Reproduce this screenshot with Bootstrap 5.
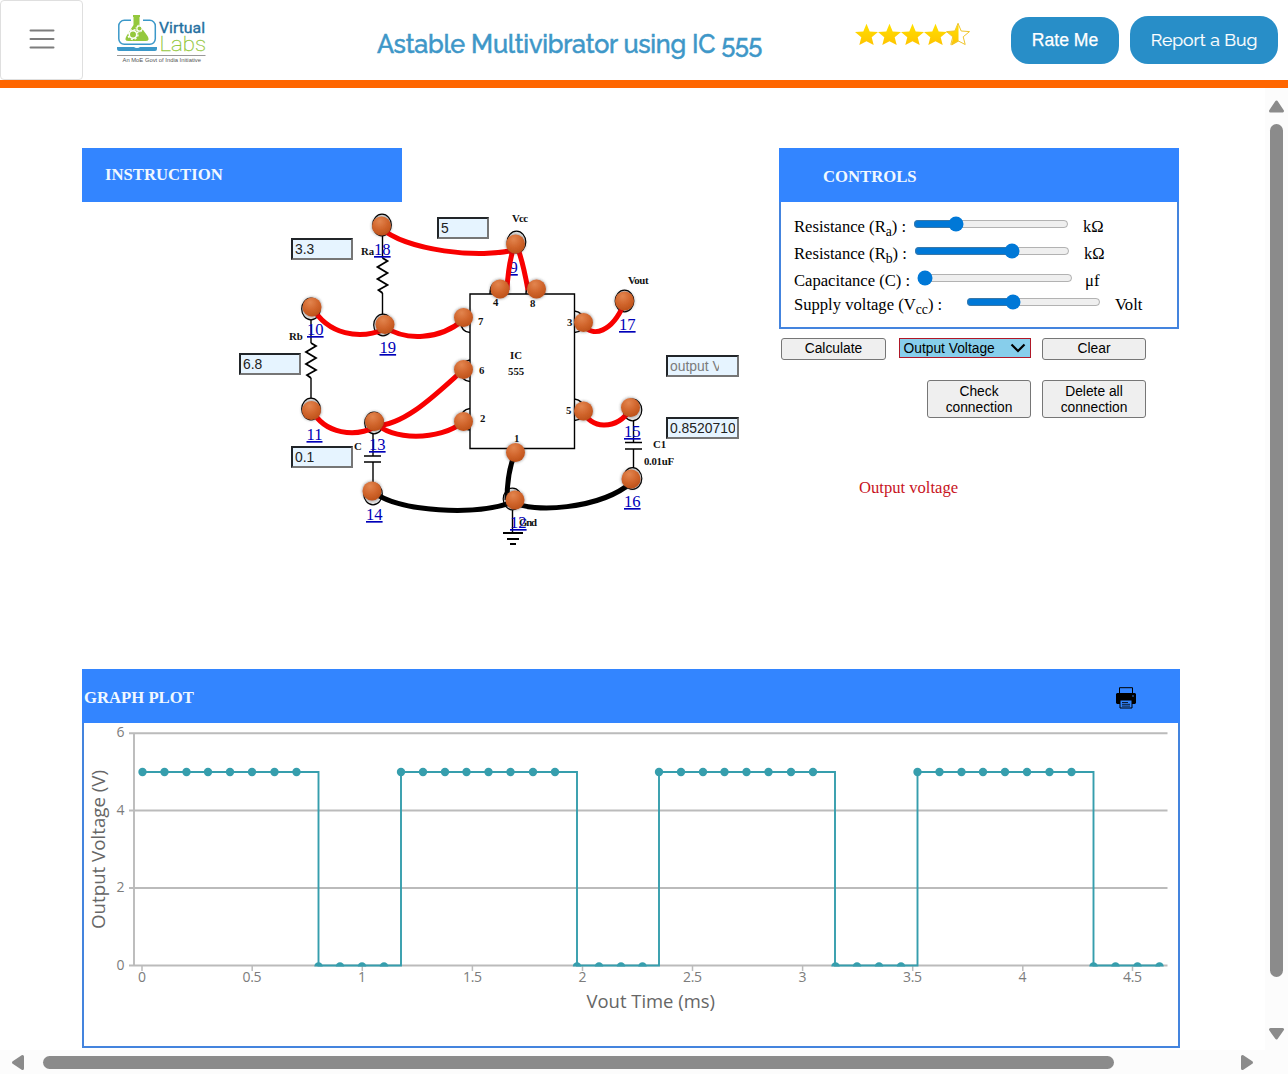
<!DOCTYPE html>
<html lang="en">
<head>
<meta charset="utf-8">
<meta name="viewport" content="width=device-width, initial-scale=1">
<title>Astable Multivibrator using IC 555</title>
<link href="https://cdn.jsdelivr.net/npm/bootstrap@5.3.0/dist/css/bootstrap.min.css" rel="stylesheet">
<script src="https://cdn.jsdelivr.net/npm/bootstrap@5.3.0/dist/js/bootstrap.bundle.min.js" defer></script>
<style>
body{height:1074px;overflow:hidden;background:#fff;color:#000;font-family:"Liberation Serif",serif;font-size:16.6px;line-height:1.2}
.topbar{height:88px;border-bottom:8px solid #ff6600}
.menu-btn{width:83px;height:80px;border:1px solid #dfdfdf;border-radius:4px;background:#fff;padding:0 0 2px 0}
.brand-logo{margin-left:33px}
.lab-title{margin:7px 0 0 169px;width:386px;font:500 25.2px Raleway,Lato,sans-serif;letter-spacing:-.25px;-webkit-text-stroke:.5px #3e97c8;color:#3e97c8;white-space:nowrap}
.stars{margin:-10px 0 0 92px}
.pill,.pill:hover{background:#288ec8;color:#fff;border:0;border-radius:18px;padding:0;white-space:nowrap}
.pill-rate{width:108px;height:47px;margin-left:40px;font:17.6px "Liberation Sans",sans-serif;-webkit-text-stroke:.25px #fff}
.pill-bug{width:148px;height:48px;margin-left:11px;padding-bottom:2px;font:17.6px Raleway,Lato,sans-serif;-webkit-text-stroke:.2px #fff}
.view{width:1265px;height:962px;padding:60px 0 0 82px}
.bench{height:521px}
.bench-left{width:697px}
.bar-title{background:#3385ff;color:aliceblue;font-weight:bold;height:54px;font-size:16.7px}
.instruction{width:320px;padding:0 0 0 23px}
.board{width:697px;height:400px}
.board input{position:absolute;height:22px;width:62px;border:2px solid;border-color:#212529 #767676 #767676 #212529;background:#e6f4ff;padding:0 2px;font:13.9px "Liberation Sans",sans-serif;color:#222;border-radius:0}
.in-ra{left:209px;top:36px}.in-vcc{left:355px;top:15px;width:52px!important}.in-rb{left:157px;top:151px}.in-c{left:209px;top:244px}
.in-out{left:584px;top:153px;width:73px!important;padding-right:18px!important}.in-t{left:584px;top:215px;width:73px!important}
.board input::placeholder{color:#7b7b7b}
.controls{width:400px;height:181px;border:2px solid #4484de;border-top:0}
.controls .bar-title{margin:0 -2px;padding:4px 0 0 44px}
.sliders{padding-top:11px}
.ctl{height:27px;padding-left:13px}
.ctl-short{height:21px}
.ctl sub{font-size:.83em;bottom:-.3em;line-height:0}
.ctl input{accent-color:#0078d7;margin:0;height:16px;position:relative;top:-3px;width:156px}
.ctl-short input{width:135px}
.ctl span{white-space:nowrap}
.unit{margin-left:14px}
.w-a{width:119px}.w-b{width:120px}.w-c{width:123px}.w-v{width:172px}
.tool,.tool:hover{background:#efefef;border:1px solid #767676;border-radius:3px;padding:0;color:#000;font:13.8px/16px "Liberation Sans",sans-serif;width:104px}
.tool-wide{width:105px}
.h-one{height:22px}.h-two{height:38px;padding-top:1px}
.tools{width:367px;padding:9px 0 0 2px}
.pair{width:367px;gap:11px;margin-top:20px}
.pick{width:132px;height:20px;margin-left:1px;border:1px solid #b01828;background:#87ceeb;font:13.8px "Liberation Sans",sans-serif;padding:0 4px}
.readout{color:#c8141e;margin:60px 0 0 80px}
.graph{width:1098px;height:379px;border:2px solid #4484de;border-top:0}
.graph .bar-title{margin:0 -2px;padding:4px 44px 0 2px}
svg{display:block}
.pinlab text{font:bold 10.8px "Liberation Serif",serif;fill:#111}
.nodelink text{font:16.6px "Liberation Serif",serif;fill:#0000b8;text-decoration:underline;text-decoration-thickness:1px}
.axis text{font:14px "Open Sans",sans-serif;fill:#7c7c7c}
.vbar{width:23px;background:#fcfcfc}.hbar{height:24px;background:#fcfcfc}
</style>
</head>
<body class="d-flex flex-column">
<header class="topbar d-flex align-items-center flex-shrink-0">
  <button class="menu-btn d-flex align-items-center justify-content-center" aria-label="Menu"><svg width="26" height="20"><path d="M1.500 1.500h23M1.500 10h23M1.500 18.500h23" stroke="#7d7d7d" stroke-width="2" stroke-linecap="round"/></svg></button>
  <svg class="brand-logo flex-shrink-0" width="92" height="54" viewBox="116 13 92 54">
    <rect x="118.800" y="20.300" width="36.500" height="24" rx="5.500" fill="#fff" stroke="#3b98c9" stroke-width="1.500"/>
    <path d="M131 18h12v10h-12z" fill="#fff"/>
    <path d="M133 15h7v2h-.500v8l8 11q3 5-2 5h-17q-5 0-2-5l7-11v-8h-.500z" fill="#94c83d"/>
    <circle cx="133" cy="34.500" r="3.700" fill="none" stroke="#fff" stroke-width="1.500"/><circle cx="133" cy="34.500" r="5" fill="none" stroke="#fff" stroke-width="1.300" stroke-dasharray="2 1.930"/>
    <circle cx="139.500" cy="28.500" r="2.600" fill="none" stroke="#fff" stroke-width="1.100"/><circle cx="139.500" cy="28.500" r="3.500" fill="none" stroke="#fff" stroke-width=".900" stroke-dasharray="1.400 1.350"/>
    <path d="M117 47h17q1 1 3 1t3-1h17v2q0 2-2 2h-36q-2 0-2-2z" fill="#3b98c9"/>
    <text x="159" y="32.600" textLength="46" lengthAdjust="spacingAndGlyphs" font-family="Roboto,sans-serif" font-size="15.500" fill="#246f9f" stroke="#246f9f" stroke-width=".350">Virtual</text>
    <text x="159.500" y="50.800" textLength="46.500" lengthAdjust="spacingAndGlyphs" font-family="Roboto,sans-serif" font-size="20" font-weight="100" fill="#94c83d" stroke="#94c83d" stroke-width=".300">Labs</text>
    <path d="M117 55.500h88.500" stroke="#999"/>
    <text x="122.500" y="62.300" textLength="78.500" lengthAdjust="spacingAndGlyphs" font-family="Liberation Sans,sans-serif" font-size="5.800" fill="#555">An MoE Govt of India Initiative</text>
  </svg>
  <h1 class="lab-title flex-shrink-0">Astable Multivibrator using IC 555</h1>
  <svg class="stars flex-shrink-0" width="116" height="26" viewBox="855 22 116 26">
    <defs><linearGradient id="gold" x2="0" y2="1"><stop offset="0" stop-color="#ffe000"/><stop offset=".5" stop-color="#ffd200"/><stop offset="1" stop-color="#ffc400"/></linearGradient>
    <path id="star" d="M0-11.500 3.200-3.800 11.500-3.200 5.200 2 7.200 9.700 0 6-7.200 9.700-5.200 2-11.500-3.200-3.200-3.800z"/></defs>
    <g fill="url(#gold)"><use href="#star" x="866.500" y="35.200"/><use href="#star" x="889.500" y="35.200"/><use href="#star" x="912.500" y="35.200"/><use href="#star" x="935.500" y="35.200"/>
    <path d="M958.500 23v18.500l-7 4 1.500-8.500-6-5.200 8-1z"/></g>
    <use href="#star" x="958" y="34.800" fill="none" stroke="#efc52c" stroke-width="1"/>
  </svg>
  <button class="btn pill pill-rate flex-shrink-0">Rate Me</button>
  <button class="btn pill pill-bug flex-shrink-0">Report a Bug</button>
</header>

<div class="d-flex">
<main class="view flex-shrink-0">
  <div class="bench d-flex">
    <section class="bench-left">
      <div class="bar-title instruction d-flex align-items-center">INSTRUCTION</div>
      <div class="board position-relative">
        <svg width="697" height="400" viewBox="82 202 697 400">
          <defs>
            <radialGradient id="copper" cx=".4" cy=".25" r=".8"><stop offset="0" stop-color="#e2854f"/><stop offset=".5" stop-color="#d2672e"/><stop offset="1" stop-color="#bb4f17"/></radialGradient>
            <filter id="halo" x="-50%" y="-50%" width="200%" height="200%"><feDropShadow dx="0" dy="0" stdDeviation="1.600" flood-color="#333" flood-opacity=".65"/></filter>
            <g id="ball"><circle r="9.500" fill="url(#copper)" filter="url(#halo)"/></g>
            <ellipse id="ring" rx="9.300" ry="10.800" fill="#e4e4e4" stroke="#000" stroke-width="1.200"/>
          </defs>
          <g fill="none" stroke="#000" stroke-width="1.400">
            <path d="M470 294H574.500V448.500H470Z"/>
            <path d="M382.500 236v22M382.500 293v22M311 319v24M311 378v22"/>
            <path stroke-width="1.800" d="M382.500 258l5 3-10 6 10 6-10 6 10 6-9 5 4 3M311 343l5 3-10 6 10 6-10 6 10 6-9 5 4 3"/>
            <path d="M373 433v23M364 456h17M364 462h17M373 462v20M633.500 420v22M625 442.500h17M625 449h17M633.500 449v20M512.500 510v23"/>
            <path d="M503 533h20M507 539h12M510 544h6" stroke-width="1.900"/>
            <path d="M470 311q-9 1-9 11t9 10.500M470 360q-9 1-9 11t9 10.500M470 408.500q-9 1-9 11t9 10.500M574.500 311q9 1 9 11t-9 10.500M574.500 399q9 1 9 11t-9 10.500M490 294q0-12 9-12M526 294q0-12 9-12"/>
          </g>
          <use href="#ring" x="382" y="225"/><use href="#ring" x="311" y="309"/><use href="#ring" x="383" y="325"/><use href="#ring" x="311" y="409"/><use href="#ring" x="374" y="423"/><use href="#ring" x="373" y="494"/><use href="#ring" x="516.500" y="242"/><use href="#ring" x="624.500" y="301"/><use href="#ring" x="632.500" y="410"/><use href="#ring" x="632.500" y="478.500"/><use href="#ring" x="512.500" y="499"/>
          <g class="pinlab"><text x="361" y="255">Ra</text><text x="289" y="340">Rb</text><text x="354" y="450">C</text><text x="512" y="222" textLength="16">Vcc</text><text x="628" y="284" textLength="20.500">Vout</text><text x="493" y="306">4</text><text x="530" y="307">8</text><text x="478" y="325">7</text><text x="479" y="374">6</text><text x="480" y="422">2</text><text x="567" y="326">3</text><text x="566" y="414">5</text><text x="514" y="442">1</text><text x="510" y="359">IC</text><text x="508" y="375">555</text><text x="653" y="448">C1</text><text x="644" y="464.500" textLength="30">0.01uF</text><text x="519" y="526" textLength="18">Gnd</text></g>
          <g class="nodelink"><text x="374" y="255">18</text><text x="307" y="335">10</text><text x="379.500" y="353">19</text><text x="306.500" y="440">11</text><text x="369" y="450">13</text><text x="366" y="520">14</text><text x="509.500" y="273">9</text><text x="619" y="330">17</text><text x="624" y="437">15</text><text x="624" y="507">16</text><text x="510" y="528">12</text></g>
          <g fill="none" stroke="#f80000" stroke-width="5">
            <path d="M381 228C405 250 480 260 518 249M514 246Q508 266 507 290M517 246Q523 262 528 290M312 307C328 335 360 340 385 329M385 327C405 341 440 340 463 320M375 426C405 425 435 395 463 370M375 422C390 441 440 441 463 422M312 410C325 435 356 437 375 427M583 325C593 338 612 332 624 304M583 411C590 428 615 432 631 409"/>
            <path stroke="#000" d="M515 453C508 470 507 485 507 500M373 492C400 512 475 516 513 502M514 502C530 513 600 510 632 482"/>
          </g>
          <use href="#ball" x="381.500" y="226"/><use href="#ball" x="312" y="307"/><use href="#ball" x="385" y="324.500"/><use href="#ball" x="311.500" y="410.500"/><use href="#ball" x="374.500" y="421.500"/><use href="#ball" x="372" y="491"/><use href="#ball" x="515.500" y="244"/><use href="#ball" x="500" y="289"/><use href="#ball" x="536.500" y="289"/><use href="#ball" x="463.500" y="317.500"/><use href="#ball" x="463.500" y="369.500"/><use href="#ball" x="463.500" y="421.500"/><use href="#ball" x="583.500" y="322.500"/><use href="#ball" x="583.500" y="411"/><use href="#ball" x="624.500" y="301"/><use href="#ball" x="630.500" y="407.500"/><use href="#ball" x="631" y="479"/><use href="#ball" x="515.500" y="452.500"/><use href="#ball" x="515" y="500"/>
        </svg>
        <input class="in-ra" value="3.3"><input class="in-vcc" value="5"><input class="in-rb" value="6.8"><input class="in-c" value="0.1"><input class="in-out" placeholder="output Voltage"><input class="in-t" value="0.8520710">
      </div>
    </section>
    <section>
      <div class="controls">
        <div class="bar-title d-flex align-items-center">CONTROLS</div>
        <div class="sliders">
          <div class="ctl d-flex align-items-center"><span class="w-a">Resistance (R<sub>a</sub>) :</span><input type="range" min="0" max="100" value="25"><span class="unit">kΩ</span></div>
          <div class="ctl d-flex align-items-center"><span class="w-b">Resistance (R<sub>b</sub>) :</span><input type="range" min="0" max="100" value="64"><span class="unit">kΩ</span></div>
          <div class="ctl d-flex align-items-center"><span class="w-c">Capacitance (C) :</span><input type="range" min="0" max="100" value="0"><span class="ms-2 ps-1">μf</span></div>
          <div class="ctl ctl-short d-flex align-items-center"><span class="w-v">Supply voltage (V<sub>cc</sub>) :</span><input type="range" min="0" max="100" value="33"><span class="unit">Volt</span></div>
        </div>
      </div>
      <div class="tools d-flex align-items-start justify-content-between">
        <button class="tool tool-wide h-one">Calculate</button>
        <div class="pick d-flex align-items-center justify-content-between" role="listbox">Output Voltage<svg width="16" height="10"><path d="M1.500 1.500l6.500 6.500 6.500-6.500" fill="none" stroke="#000" stroke-width="2.200"/></svg></div>
        <button class="tool h-one">Clear</button>
      </div>
      <div class="pair d-flex justify-content-end"><button class="tool h-two">Check<br>connection</button><button class="tool h-two">Delete all<br>connection</button></div>
      <p class="readout">Output voltage</p>
    </section>
  </div>
  <section class="graph">
    <div class="bar-title d-flex align-items-center justify-content-between">GRAPH PLOT
      <svg width="20" height="22" viewBox="0 0 20 22"><path d="M3.500 7V.700h13V7" stroke="#000" fill="none"/><path d="M1 6h18l1 1v9l-1 1H1l-1-1V7z"/><path d="M4 13h12v8H4z" fill="#3385ff" stroke="#000"/><path d="M6 15.500h6M6 17.300h8M6 19.100h8" stroke="#000" stroke-width=".800"/><circle cx="17" cy="9" r=".800" fill="#3385ff"/></svg>
    </div>
    <svg width="1094" height="323" viewBox="84 723 1094 323">
      <defs>
        <marker id="dot" markerUnits="userSpaceOnUse" markerWidth="10" markerHeight="10" refX="5" refY="5"><circle cx="5" cy="5" r="4.200" fill="#369ead"/></marker>
        <marker id="half" markerUnits="userSpaceOnUse" markerWidth="10" markerHeight="10" refX="5" refY="5"><path d="M.800 5.500a4.200 4.200 0 0 1 8.400 0z" fill="#369ead"/></marker>
      </defs>
      <path d="M129 733.300H1167.500M129 810.500H1167.500M129 888H1167.500M129 965.500H1167.500M134 733V966" stroke="#bbb" stroke-width="1.900" fill="none"/>
      <path d="M142 966v5M252.200 966v5M362.300 966v5M472.400 966v5M582.500 966v5M692.500 966v5M802.600 966v5M912.700 966v5M1022.800 966v5M1132.500 966v5" stroke="#bbb" stroke-width="1.500"/>
      <path d="M142 772H318.500V965.500H401V772H577V965.500H659V772H835V965.500H917.500V772H1093.500V965.500H1160" fill="none" stroke="#369ead" stroke-width="1.900"/>
      <g fill="none" marker-start="url(#dot)" marker-mid="url(#dot)" marker-end="url(#dot)">
        <path d="M142.500 772h22h22h21.500h22h22h22.500h22M401 772h22h22h21.500h22h22h22.500h22M659 772h22h22h21.500h22h22h22.500h22M917.500 772h22h22h21.500h22h22h22.500h22"/>
      </g>
      <g fill="none" marker-start="url(#half)" marker-mid="url(#half)" marker-end="url(#half)">
        <path d="M318.500 966h21.500h22h22M577 966h22h22h21.500M835.500 966h21.500h22h22M1093.500 966h22h22h22"/>
      </g>
      <g class="axis" text-anchor="end"><text x="124.500" y="737">6</text><text x="124.500" y="815">4</text><text x="124.500" y="892">2</text><text x="124.500" y="970">0</text></g>
      <g class="axis" text-anchor="middle"><text x="142" y="982">0</text><text x="252" y="982" textLength="19">0.5</text><text x="362" y="982">1</text><text x="472.500" y="982" textLength="19">1.5</text><text x="582.500" y="982">2</text><text x="692.500" y="982" textLength="19">2.5</text><text x="802.500" y="982">3</text><text x="912.500" y="982" textLength="19">3.5</text><text x="1022.500" y="982">4</text><text x="1132.500" y="982" textLength="19">4.5</text></g>
      <g font-family="Open Sans,sans-serif" font-size="18" fill="#666"><text x="586.500" y="1008" textLength="128.500" lengthAdjust="spacingAndGlyphs">Vout Time (ms)</text><text transform="translate(105 929) rotate(-90)" textLength="159" lengthAdjust="spacingAndGlyphs">Output Voltage (V)</text></g>
    </svg>
  </section>
</main>
<aside class="vbar" aria-hidden="true"><svg width="23" height="962" viewBox="1265 88 23 962" fill="#8b8b8b" stroke="#8b8b8b" stroke-linejoin="round"><path d="M1276.500 102l6 9h-12z" stroke-width="3"/><rect x="1270" y="124" width="13" height="853" rx="6.500" stroke="none"/><path d="M1276.500 1038l6-8.500h-12z" stroke-width="3"/></svg></aside>
</div>
<footer class="hbar" aria-hidden="true"><svg width="1288" height="24" viewBox="0 1050 1288 24" fill="#8b8b8b" stroke="#8b8b8b" stroke-linejoin="round"><path d="M13.500 1062.500l9-6v12z" stroke-width="3"/><rect x="43" y="1056" width="1071" height="13" rx="6.500" stroke="none"/><path d="M1251.500 1062.500l-9-6v12z" stroke-width="3"/></svg></footer>
</body>
</html>
